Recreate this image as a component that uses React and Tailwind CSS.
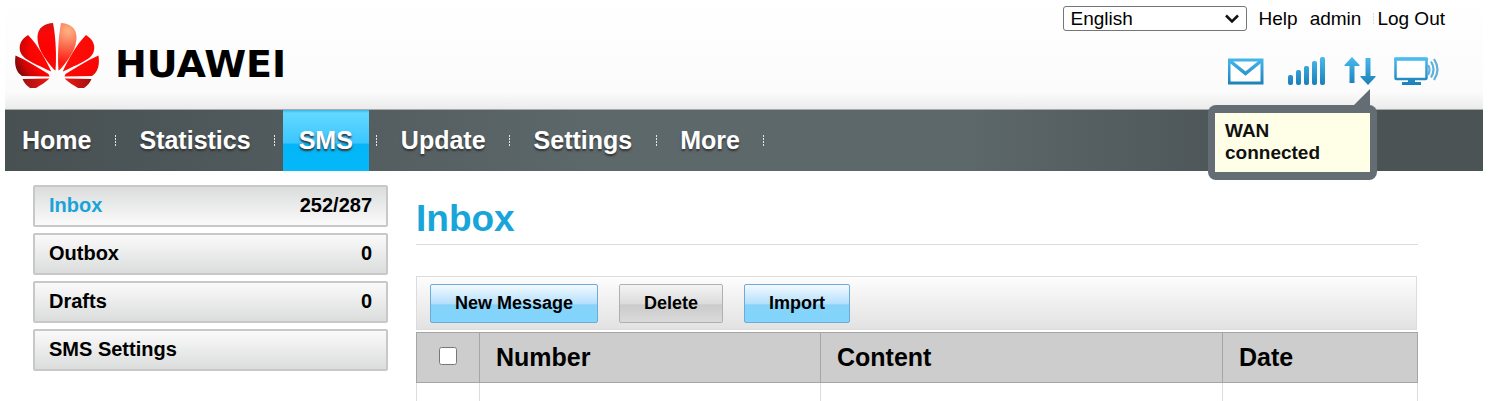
import { useState } from 'react';
import clsx from 'clsx';

const navItems = ['Home', 'Statistics', 'SMS', 'Update', 'Settings', 'More'];

const folders = [
  { name: 'Inbox', count: '252/287' },
  { name: 'Outbox', count: '0' },
  { name: 'Drafts', count: '0' },
  { name: 'SMS Settings', count: '' },
];

function Logo() {
  return (
    <a href="#home" className="flex items-center gap-4" aria-label="Huawei home">
      <svg width="84" height="65" viewBox="15 23 84 65">
        <defs>
          <radialGradient id="petal" gradientUnits="userSpaceOnUse" cx="60" cy="48" r="50">
            <stop offset="0" stopColor="#ff1408" />
            <stop offset="0.6" stopColor="#fb0303" />
            <stop offset="0.8" stopColor="#c80606" />
            <stop offset="1" stopColor="#6e0606" />
          </radialGradient>
          <radialGradient id="petalRight" gradientUnits="userSpaceOnUse" cx="60" cy="45" r="58">
            <stop offset="0" stopColor="#ff1408" />
            <stop offset="0.7" stopColor="#fb0505" />
            <stop offset="1" stopColor="#c01010" />
          </radialGradient>
          <radialGradient id="petalTop" gradientUnits="userSpaceOnUse" cx="47" cy="50" r="30">
            <stop offset="0" stopColor="#ff0000" />
            <stop offset="0.6" stopColor="#fa0808" />
            <stop offset="1" stopColor="#c01a14" />
          </radialGradient>
          <radialGradient id="petalLight" gradientUnits="userSpaceOnUse" cx="68" cy="31" r="32">
            <stop offset="0" stopColor="#ffb482" />
            <stop offset="0.35" stopColor="#fb8060" />
            <stop offset="1" stopColor="#fb1a10" />
          </radialGradient>
          <linearGradient id="petalLow" x1="0" y1="0" x2="1" y2="0">
            <stop offset="0" stopColor="#a01010" />
            <stop offset="1" stopColor="#f01814" />
          </linearGradient>
        </defs>
        <path fill="url(#petalTop)" d="M55.500 70.500C56.500 58 56 38 53 23C45 23 38 28 37.500 36C37 47 43 57 54 69.500Z" />
        <path fill="url(#petal)" d="M51 71C46 60 38 45 28 35C20 40 18 47 21 53.500C24 60 38 65 51 71.500Z" />
        <path fill="url(#petal)" d="M49.500 76.500L48.500 74C38 68 28 61 15.500 55.500C14.500 63 15 71 22 76Z" />
        <path fill="url(#petalLow)" d="M22.500 79L49.500 78.500C45 82.500 41 85 36 88H30C27 86 24 83 22.500 79Z" />
        <path fill="url(#petalLight)" d="M58.500 70.500C57.500 58 58 38 61 23C69 23 76 28 76.500 36C77 47 71 57 60 69.500Z" />
        <path fill="url(#petalRight)" d="M63 71C68 60 76 45 86 35C94 40 96 47 93 53.500C90 60 76 65 63 71.500Z" />
        <path fill="url(#petalRight)" d="M64.500 76.500L65.500 74C76 68 86 61 98.500 55.500C99.500 63 99 71 92 76Z" />
        <g transform="matrix(-1 0 0 1 114 0)">
          <path fill="url(#petalLow)" d="M22.500 79L49.500 78.500C45 82.500 41 85 36 88H30C27 86 24 83 22.500 79Z" />
        </g>
      </svg>
      <span className="pt-4 text-[38px] leading-none font-bold text-black font-['DejaVu_Sans',sans-serif]">HUAWEI</span>
    </a>
  );
}

function StatusIcons() {
  return (
    <div className="flex gap-[18px] mt-6 mr-[5px]">
      <svg width="0" height="0" className="absolute">
        <defs>
          <linearGradient id="blue" gradientUnits="userSpaceOnUse" x1="0" y1="1" x2="0" y2="30">
            <stop offset="0" stopColor="#4bbcf0" />
            <stop offset="1" stopColor="#1c7fb8" />
          </linearGradient>
        </defs>
      </svg>
      <svg width="40" height="32" viewBox="0 0 40 32" fill="none" stroke="url(#blue)">
        <rect x="1" y="5" width="33" height="23" fill="#fff" strokeWidth="3" />
        <path d="M2 6L17.500 18.500L33 6" strokeWidth="3.500" />
      </svg>
      <svg width="40" height="32" viewBox="0 0 40 32" fill="url(#blue)">
        <rect x="2" y="20" width="5" height="10" rx="2" />
        <rect x="10" y="15" width="5" height="15" rx="2" />
        <rect x="18" y="11" width="5" height="19" rx="2" />
        <rect x="26" y="6" width="5" height="24" rx="2" />
        <rect x="34" y="2" width="5" height="28" rx="2" />
      </svg>
      <div className="relative">
        <svg width="32" height="32" viewBox="0 0 32 32" fill="url(#blue)">
          <path d="M8 2L15.500 10V11H10.500V28H5.500V11H0.500V10Z" />
          <path d="M24 30L16.500 22V21H21.500V3H26.500V21H31.500V22Z" />
        </svg>
        <div role="tooltip" className="absolute top-[50px] -right-px w-[169px] rounded-lg bg-[#646c74] px-[7px] py-2">
          <svg width="17" height="17" viewBox="0 0 17 17" className="absolute -top-4 right-[7px]">
            <path d="M17 0V17H0Z" fill="#646c74" />
          </svg>
          <p className="bg-[#ffffe7] px-[10px] pt-[7px] pb-2 text-[19px] leading-[22px] font-bold text-[#111]">
            WAN<br />connected
          </p>
        </div>
      </div>
      <svg width="46" height="32" viewBox="0 0 46 32" fill="none" stroke="url(#blue)">
        <rect x="1.500" y="4" width="31" height="20" rx="1" fill="#fff" strokeWidth="2.500" />
        <path d="M1.500 4H32.500" stroke="#4bbcf0" strokeWidth="3.500" strokeLinecap="round" />
        <path d="M14 25H21V27H27V30H8V27H14Z" fill="url(#blue)" stroke="none" />
        <path d="M34 10Q37 14.500 34 20M37 6.500Q42 14.500 37 22.500M40 4Q47 14.500 40 25" stroke="#5fb0dc" strokeWidth="2.200" />
      </svg>
    </div>
  );
}

function Header() {
  return (
    <header className="flex items-start justify-between h-[110px] pl-[10px] pr-[38px] border-b border-[#a9abab] bg-[linear-gradient(#fff,#fbfbfb_85%,#ebebeb)]">
      <div className="pt-[23px]">
        <Logo />
      </div>
      <div className="flex flex-col items-end pt-[6px] text-[19px] leading-[25px] text-black">
        <div className="flex items-center">
          <div className="relative mr-3">
            <select aria-label="Language" className="block appearance-none w-[184px] h-[25px] pl-[7px] rounded-[3px] border border-[#767676] bg-white text-[19px] leading-[22px]">
              <option>English</option>
            </select>
            <svg width="14" height="10" viewBox="0 0 14 10" className="absolute right-2 top-2 pointer-events-none" fill="none" stroke="#111" strokeWidth="2.500">
              <path d="M1 1.500L7 7.500L13 1.500" />
            </svg>
          </div>
          <a href="#help" className="mr-3">Help</a>
          <a href="#admin" className="mr-3">admin</a>
          <a href="#logout" className="pl-1 bg-[repeating-linear-gradient(#ddd_0_2px,transparent_2px_3px)] bg-[length:1px_12px] bg-no-repeat bg-[position:0_7px]">Log Out</a>
        </div>
        <StatusIcons />
      </div>
    </header>
  );
}

function NavBar() {
  return (
    <nav className="bg-[linear-gradient(to_right,#485052,#4c5557_10%,#5d686a_40%,#5d686a_65%,#4b5355_85%,#4b5355)]">
      <ul className="flex h-[61px] pl-px text-[25px] font-bold text-white">
        {navItems.map((item) => (
          <li key={item} className="flex items-center">
            <a
              href={`#${item.toLowerCase()}`}
              className={clsx(
                'flex items-center h-full px-4 [text-shadow:0_2px_2px_#333]',
                item === 'SMS' && 'bg-[linear-gradient(#35b5e6,#62d8ff_5%,#3cc6ff_54%,#04b6f8_56%,#04b8fa)]'
              )}
            >
              {item}
            </a>
            <span className="w-4 flex justify-center">
              <span className="w-px h-[11px] bg-[repeating-linear-gradient(#e4e6e6_0_2px,transparent_2px_3px)]" />
            </span>
          </li>
        ))}
      </ul>
    </nav>
  );
}

function Sidebar() {
  return (
    <aside className="w-[355px] shrink-0 flex flex-col gap-[6px] text-xl leading-6 font-bold">
      {folders.map(({ name, count }) => (
        <a
          key={name}
          href={`#${name}`}
          className={clsx(
            'flex justify-between h-[42px] px-[14px] pt-[6px] rounded-xs border-2 border-[#c8c8c8]',
            name === 'Inbox' ? 'bg-linear-to-b from-[#dbdddc] to-[#fafafa]' : 'bg-linear-to-b from-[#fafafa] to-[#dbdddc]'
          )}
        >
          <span className={name === 'Inbox' ? 'text-[#1ba3d9]' : 'text-black'}>{name}</span>
          <span className="text-black">{count}</span>
        </a>
      ))}
    </aside>
  );
}

function ToolButton({ children, disabled }) {
  return (
    <button
      type="button"
      disabled={disabled}
      className={clsx(
        'h-[39px] px-6 rounded-xs border text-lg font-bold text-black',
        disabled
          ? 'border-[#b0b0b0] bg-[linear-gradient(#f4f4f4,#dcdcdc_50%,#cbcbcb_54%,#dadada)]'
          : 'border-[#6fa9d8] bg-[linear-gradient(#f2faff,#b5e0fb_50%,#85d3f9_54%,#82d5fd)]'
      )}
    >
      {children}
    </button>
  );
}

function Messages() {
  const [checked, setChecked] = useState(false);

  return (
    <main className="flex-1">
      <h1 className="h-[60px] pt-3 border-b border-[#dcdcdc] text-[37px] leading-[44px] font-bold text-[#18a5d9]">Inbox</h1>
      <div className="flex items-center gap-[21px] h-[54px] mt-[31px] mr-px px-[13px] border border-[#dcdcdc] bg-linear-to-b from-[#fdfdfd] to-[#e2e2e2]">
        <ToolButton>New Message</ToolButton>
        <ToolButton disabled>Delete</ToolButton>
        <ToolButton>Import</ToolButton>
      </div>
      <table className="w-full mt-[2px] table-fixed border-collapse text-left text-[25px] leading-[30px]">
        <thead className="bg-[#cdcdcd]">
          <tr className="h-[50px]">
            <th className="w-[63px] border border-[#a5a5a5] text-center">
              <input
                type="checkbox"
                aria-label="Select all messages"
                checked={checked}
                onChange={(e) => setChecked(e.target.checked)}
                className="block mx-auto -mt-1 size-[18px]"
              />
            </th>
            <th className="w-[341px] pl-4 pb-[2px] border border-[#a5a5a5]">Number</th>
            <th className="w-[402px] pl-4 pb-[2px] border border-[#a5a5a5]">Content</th>
            <th className="pl-4 pb-[2px] border border-[#a5a5a5]">Date</th>
          </tr>
        </thead>
        <tbody>
          <tr className="h-12">
            <td className="border border-[#dcdcdc]" />
            <td className="border border-[#dcdcdc]" />
            <td className="border border-[#dcdcdc]" />
            <td className="border border-[#dcdcdc]" />
          </tr>
        </tbody>
      </table>
    </main>
  );
}

export default function App() {
  return (
    <div className="h-screen overflow-hidden bg-white pl-[5px] pr-5 font-['Liberation_Sans',Arial,sans-serif]">
      <Header />
      <NavBar />
      <div className="flex gap-7 pl-7 pr-[65px] pt-[14px]">
        <Sidebar />
        <Messages />
      </div>
    </div>
  );
}
